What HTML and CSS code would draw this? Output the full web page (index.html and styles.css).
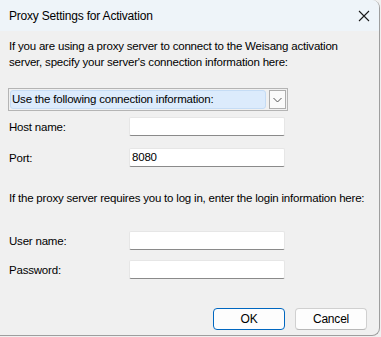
FILE: index.html
```html
<!DOCTYPE html>
<html lang="en">
<head>
    <meta charset="UTF-8">
    <title>Proxy Settings for Activation</title>
    <link rel="stylesheet" href="styles.css">
</head>
<body>
<div class="window">
    <div class="titlebar">
        <span class="title">Proxy Settings for Activation</span>
        <svg class="close" width="12" height="12" viewBox="0 0 12 12">
            <path d="M1 1 L11 11 M11 1 L1 11" stroke="#1a1a1a" stroke-width="1.1" fill="none"/>
        </svg>
    </div>
    <div class="content">
        <p class="intro">If you are using a proxy server to connect to the Weisang activation<br>server, specify your server's connection information here:</p>

        <div class="combo">
            <div class="combo-value">Use the following connection information:</div>
            <div class="combo-btn">
                <svg width="9" height="6" viewBox="0 0 9 6"><path d="M0.5 1 L4.5 5 L8.5 1" stroke="#555" stroke-width="1" fill="none"/></svg>
            </div>
        </div>

        <div class="row first">
            <label>Host name:</label>
            <div class="field"></div>
        </div>
        <div class="row">
            <label>Port:</label>
            <div class="field">8080</div>
        </div>

        <p class="login-note">If the proxy server requires you to log in, enter the login information here:</p>

        <div class="row">
            <label>User name:</label>
            <div class="field"></div>
        </div>
        <div class="row last">
            <label>Password:</label>
            <div class="field"></div>
        </div>

        <div class="buttons">
            <button class="btn default">OK</button>
            <button class="btn">Cancel</button>
        </div>
    </div>
</div>
</body>
</html>
```

FILE: styles.css
```css
body { margin: 0; background: #f0f0f0; font-family: "Liberation Sans", Arial, sans-serif; font-size: 11.5px; letter-spacing: -0.2px; color: #000; }
.window {
    width: 379px;
    height: 335px;
    background: #f0f0f0;
    border-right: 1px solid #9e9e9e;
    border-bottom: 1px solid #9e9e9e;
    border-radius: 0 8px 8px 0;
    overflow: hidden;
}
.titlebar {
    height: 31px;
    background: #eef4f9;
    display: flex;
    align-items: center;
    justify-content: space-between;
    padding: 0 9px 0 9px;
}
.title { font-size: 12px; letter-spacing: -0.2px; }
.content { padding: 0 9px; }
.intro { margin: 7px 0 0; line-height: 16px; white-space: nowrap; }
.combo {
    margin-top: 18px;
    width: 276px;
    height: 21px;
    border: 1px solid #b4b4b4;
    display: flex;
    align-items: center;
    padding: 0 1px;
    margin-left: -1px;
}
.combo-value {
    flex: 1;
    height: 17px;
    line-height: 17px;
    background: #dcebfc;
    border: 1px solid #c5dcf5;
    border-radius: 3px;
    padding-left: 1px;
}
.combo-btn {
    width: 15px;
    height: 17px;
    margin-left: 3px;
    border: 1px solid #adadad;
    display: flex;
    align-items: center;
    justify-content: center;
    background: #fafafa;
}
.row { display: flex; align-items: center; margin-top: 12px; }
.row.first { margin-top: 6px; }
.row.last { margin-top: 10px; }
.row label { width: 120px; }
.field {
    width: 152px;
    height: 17px;
    line-height: 17px;
    background: #fff;
    border: 1px solid #e6e6e6;
    border-bottom: 1px solid #8a8a8a;
    padding-left: 2px;
    border-radius: 2px;
}
.login-note { margin: 23px 0 25px; line-height: 16px; white-space: nowrap; }
.login-note + .row { margin-top: 0; }
.buttons { display: flex; justify-content: flex-end; gap: 10px; margin-top: 29px; padding-right: 3px; }
.btn {
    width: 72px;
    height: 22px;
    font-family: inherit;
    font-size: 12px;
    letter-spacing: -0.2px;
    background: #fdfdfd;
    border: 1px solid #d0d0d0;
    border-bottom-color: #b8b8b8;
    border-radius: 4px;
    padding: 0;
}
.btn.default { border: 1px solid #0067c0; }
```
